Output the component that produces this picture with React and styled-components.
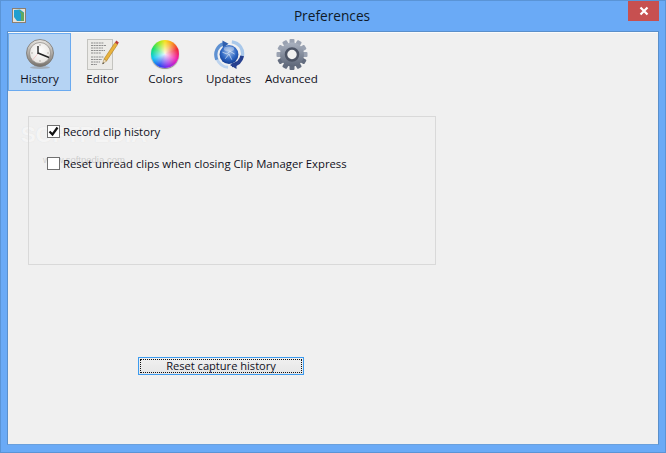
import React from 'react';
import styled, { createGlobalStyle } from 'styled-components';

const Global = createGlobalStyle`
  html, body { margin: 0; padding: 0; background: #6aaaf6; }
  body { font-family: "Open Sans", "Noto Sans", sans-serif; }
`;

const Win = styled.div`
  width: 666px;
  height: 453px;
  box-sizing: border-box;
  border: 1px solid #5a94d6;
  background: #6aaaf6;
  display: flex;
  flex-direction: column;
  overflow: hidden;
`;

const TitleBar = styled.div`
  height: 30px;
  flex: none;
  display: flex;
  align-items: flex-start;
  padding-left: 11px;
  position: relative;
`;

const AppIcon = styled.svg`
  width: 14px;
  height: 15px;
  margin-top: 7px;
  flex: none;
`;

const Title = styled.div`
  position: absolute;
  left: 0;
  right: 2px;
  top: 5px;
  text-align: center;
  font-family: "Open Sans", sans-serif;
  font-size: 13.7px;
  line-height: 19px;
  color: #0f1a28;
`;

const Close = styled.div`
  position: absolute;
  top: 0;
  right: 6px;
  width: 31px;
  height: 20px;
  background: #c75050;
  display: flex;
  align-items: center;
  justify-content: center;
`;

const Client = styled.div`
  margin: 0 6px 7px 6px;
  flex: 1;
  background: #f0f0f0;
  border: 1px solid #5a8fca;
  border-bottom-color: #6aa0dc;
  display: flex;
  flex-direction: column;
  position: relative;
`;

const Toolbar = styled.div`
  display: flex;
  height: 58px;
  border-top: 1px solid #fbfbfb;
`;

const ToolButton = styled.div`
  width: 63px;
  box-sizing: border-box;
  height: 58px;
  display: flex;
  flex-direction: column;
  align-items: center;
  padding-top: 5px;
  background: ${p => (p.$active ? '#b5d3f3' : 'transparent')};
  border: 1px solid ${p => (p.$active ? '#6aaaf0' : 'transparent')};
`;

const IconBox = styled.div`
  width: 32px;
  height: 32px;
  display: flex;
  align-items: center;
  justify-content: center;
`;

const ToolLabel = styled.div`
  font-size: 11.6px;
  line-height: 16px;
  color: #10101c;
  white-space: nowrap;
`;

const Wheel = styled.div`
  width: 28px;
  height: 28px;
  margin: 0 2px 2px 0;
  border-radius: 50%;
  background:
    radial-gradient(circle at 50% 50%, rgba(255,255,255,.9) 0, rgba(255,255,255,.4) 35%, rgba(255,255,255,0) 65%),
    conic-gradient(#f8e020, #f8a020 30deg, #f02838 70deg, #f020b0 115deg, #9028e8 165deg, #2848f0 205deg, #10c8f0 250deg, #18e068 295deg, #a0e820 335deg, #f8e020);
  box-shadow: 0 1px 1px rgba(60, 60, 60, .6);
`;

const GroupBox = styled.div`
  position: relative;
  z-index: 1;
  box-sizing: border-box;
  width: 408px;
  height: 149px;
  margin: 25px 0 0 20px;
  border: 1px solid #d9d9d9;
  padding: 8px 0 0 18px;
  display: flex;
  flex-direction: column;
  gap: 19px;
`;

const CheckRow = styled.div`
  display: flex;
  align-items: center;
  gap: 3px;
  height: 13px;
  font-size: 11.3px;
  color: #10101c;
  white-space: nowrap;
`;

const Check = styled.div`
  width: 13px;
  height: 13px;
  box-sizing: border-box;
  border: 1px solid #707070;
  background: #fff;
  flex: none;
  display: flex;
  align-items: center;
  justify-content: center;
`;

const ButtonRow = styled.div`
  margin: 92px 0 0 130px;
`;

const ResetButton = styled.div`
  width: 166px;
  height: 18px;
  box-sizing: border-box;
  border: 1px solid #3c9bef;
  background: linear-gradient(#f0f0f0, #e6e6e6);
  padding: 1px;
`;

const ResetInner = styled.div`
  height: 100%;
  box-sizing: border-box;
  border: 1px dotted #111;
  font-size: 11.1px;
  line-height: 12px;
  text-align: center;
  color: #10101c;
`;

const Watermark = styled.div`
  position: absolute;
  left: 13px;
  top: 90px;
  font-family: "Liberation Sans", sans-serif;
  font-size: 22px;
  font-weight: 700;
  color: rgba(255, 255, 255, .7);
  text-shadow: 0 0 1px rgba(190, 190, 190, .35);
  pointer-events: none;
`;

const WatermarkSmall = styled.div`
  position: absolute;
  left: 35px;
  top: 122px;
  font-family: "Liberation Sans", sans-serif;
  font-size: 9.5px;
  color: rgba(170, 170, 170, .5);
  pointer-events: none;
`;

const ClockIcon = () => (
  <svg width="32" height="32" viewBox="0 0 32 32">
    <defs>
      <linearGradient id="rim" x1="0" y1="0" x2="0" y2="1">
        <stop offset="0" stopColor="#e8e6e2" />
        <stop offset="1" stopColor="#77726c" />
      </linearGradient>
      <radialGradient id="face" cx=".5" cy=".4" r=".6">
        <stop offset="0" stopColor="#ffffff" />
        <stop offset="1" stopColor="#e6e3df" />
      </radialGradient>
    </defs>
    <ellipse cx="16" cy="28.500" rx="10" ry="1.500" fill="#999" opacity=".6" />
    <circle cx="16" cy="14" r="13.500" fill="url(#rim)" stroke="#77736e" strokeWidth=".8" />
    <circle cx="16" cy="14" r="10.500" fill="url(#face)" stroke="#8b8782" strokeWidth=".7" />
    <path d="M16 5v2M16 21v2M7 14h2M23 14h2" stroke="#b5b1ab" strokeWidth="1" />
    <path d="M14 14.500L8.500 21" stroke="#eebcbc" strokeWidth=".8" />
    <path d="M14 7v8" stroke="#222" strokeWidth="1.400" />
    <path d="M14 14l11 4.500" stroke="#222" strokeWidth="1.500" />
  </svg>
);

const EditorIcon = () => (
  <svg width="32" height="32" viewBox="0 0 32 32">
    <rect x="0.500" y="0.500" width="25" height="30" fill="#ecebe8" stroke="#c4c4c0" />
    <path
      d="M4 4h13M4 6.500h15M4 9h12M4 11.500h14M4 14h10M4 18h13M4 20.500h11M4 23h9M4 25.500h6"
      stroke="#8d8d8d"
      strokeWidth="1"
      strokeDasharray="2 .6"
    />
    <path d="M17 20L28 3.500l2.500 2L19.500 22z" fill="#e9b33e" stroke="#a97a20" strokeWidth=".6" />
    <path d="M15.500 25l1.500-5 2.500 2z" fill="#f1dfb8" stroke="#8a6a30" strokeWidth=".4" />
    <path d="M15.500 25l.5-1.800 1.300 1z" fill="#333" />
    <path d="M28 3.500l1.300-2 2.500 2-1.300 2z" fill="#b93a3a" />
  </svg>
);

const UpdatesIcon = () => (
  <svg width="34" height="32" viewBox="0 0 34 32">
    <defs>
      <radialGradient id="globe" cx=".5" cy=".35" r=".7">
        <stop offset="0" stopColor="#a8c4ea" />
        <stop offset=".55" stopColor="#2f68c4" />
        <stop offset="1" stopColor="#0c3388" />
      </radialGradient>
    </defs>
    <path d="M20 2c8 1 13 8 11 16" fill="none" stroke="#a9c8ea" strokeWidth="3.500" />
    <path d="M31 17c-1 5-5 9-11 10" fill="none" stroke="#27408f" strokeWidth="4" />
    <path d="M25 23v8l-7-4.500z" fill="#27408f" />
    <path d="M4 20c2 5 7 9 12 9" fill="none" stroke="#bcd3ee" strokeWidth="3" />
    <path d="M4 21C1 13 5 6 11 4" fill="none" stroke="#5f91d2" strokeWidth="3.500" />
    <path d="M10 .5l6.500 3.500-6 4.500z" fill="#2f5fae" />
    <circle cx="17" cy="15.500" r="10" fill="url(#globe)" />
    <path d="M10 13l5 2 3-3 5 3M13 20l4-5 3 6" fill="none" stroke="#e4eefb" strokeWidth=".7" />
    <ellipse cx="17" cy="9.500" rx="5.500" ry="2.500" fill="#fff" opacity=".35" />
  </svg>
);

const teeth = [0, 30, 60, 90, 120, 150, 180, 210, 240, 270, 300, 330];

const GearIcon = () => (
  <svg width="32" height="32" viewBox="0 0 32 32">
    <defs>
      <linearGradient id="steel" x1="0" y1="0" x2="0" y2="1">
        <stop offset="0" stopColor="#aab2c0" />
        <stop offset="1" stopColor="#5d6678" />
      </linearGradient>
    </defs>
    {teeth.map(a => (
      <rect key={a} x="13.500" y="0" width="5" height="7" rx="1" fill={a > 90 && a < 270 ? '#636c7e' : '#9aa2b1'} transform={`rotate(${a} 16 15.500)`} />
    ))}
    <circle cx="16" cy="15.500" r="12" fill="url(#steel)" />
    <circle cx="16" cy="15.500" r="6" fill="#f0f0f0" stroke="#4c5465" strokeWidth="2.500" />
  </svg>
);

const tools = [
  { label: 'History', icon: <ClockIcon />, active: true },
  { label: 'Editor', icon: <EditorIcon /> },
  { label: 'Colors', icon: <Wheel /> },
  { label: 'Updates', icon: <UpdatesIcon /> },
  { label: 'Advanced', icon: <GearIcon /> },
];

export default function App() {
  return (
    <>
      <Global />
      <Win>
        <TitleBar>
          <AppIcon viewBox="0 0 14 15">
            <rect x=".5" y=".5" width="13" height="14" fill="#e6e2da" stroke="#8c7f70" />
            <path d="M2 2l6-.5 4 3V13H5L2 9z" fill="#1f9fd0" />
            <path d="M7 2l5 3v8H9V6z" fill="#5fa860" />
          </AppIcon>
          <Title>Preferences</Title>
          <Close>
            <svg width="10" height="10" viewBox="0 0 10 10">
              <path d="M1.500 1.500l7 7M8.500 1.500l-7 7" stroke="#fff" strokeWidth="2.200" />
            </svg>
          </Close>
        </TitleBar>
        <Client>
          <Watermark>SOFTPEDIA</Watermark>
          <WatermarkSmall>www.softpedia.com</WatermarkSmall>
          <Toolbar>
            {tools.map(t => (
              <ToolButton key={t.label} $active={t.active}>
                <IconBox>{t.icon}</IconBox>
                <ToolLabel>{t.label}</ToolLabel>
              </ToolButton>
            ))}
          </Toolbar>
          <GroupBox>
            <CheckRow>
              <Check>
                <svg width="11" height="11" viewBox="0 0 11 11">
                  <path d="M1.500 5.500l3 3 5-7" fill="none" stroke="#111" strokeWidth="2.200" />
                </svg>
              </Check>
              Record clip history
            </CheckRow>
            <CheckRow>
              <Check />
              Reset unread clips when closing Clip Manager Express
            </CheckRow>
          </GroupBox>
          <ButtonRow>
            <ResetButton>
              <ResetInner>Reset capture history</ResetInner>
            </ResetButton>
          </ButtonRow>
        </Client>
      </Win>
    </>
  );
}
